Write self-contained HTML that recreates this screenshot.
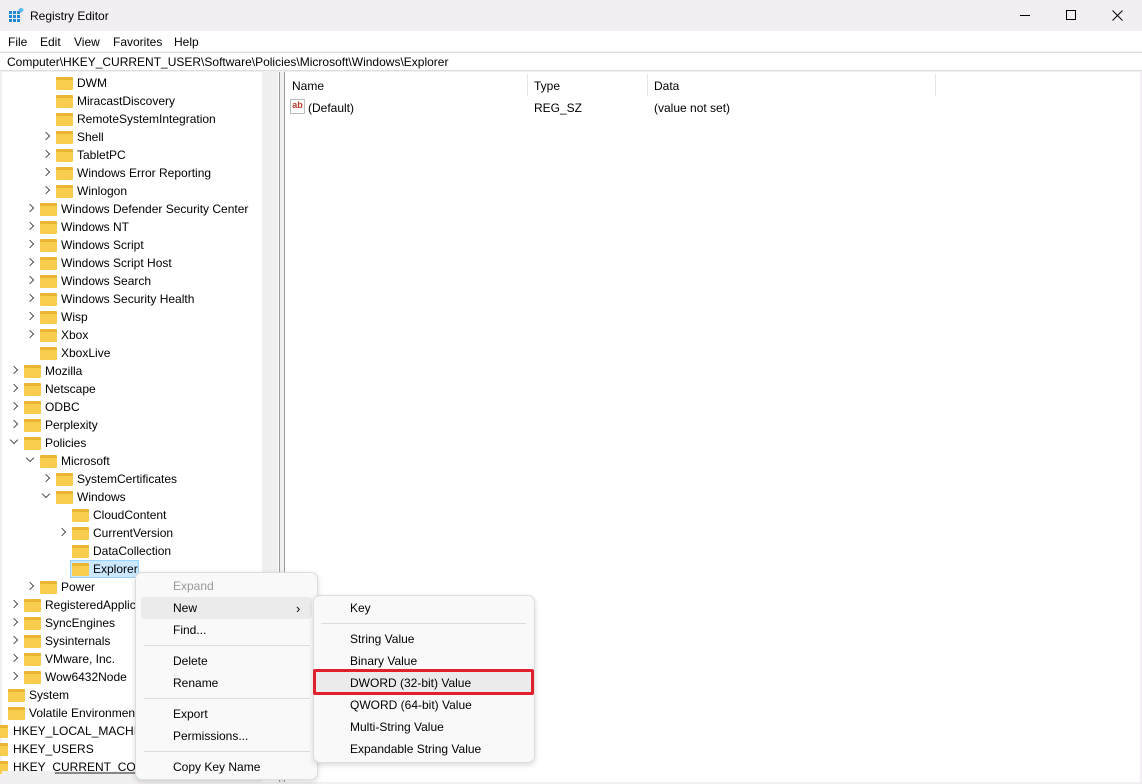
<!DOCTYPE html>
<html><head><meta charset="utf-8"><style>
*{margin:0;padding:0;box-sizing:border-box}
body{width:1142px;height:784px;position:relative;overflow:hidden;background:#f3eef3;font-family:"Liberation Sans",sans-serif;font-size:12px;color:#000}
.a{position:absolute;white-space:nowrap}
.r{position:absolute;height:18px;line-height:18px;white-space:nowrap}
.f{position:absolute;width:17px;height:13px;top:3px;background:#f8cd4e;border-radius:1px;border-top:3px solid #e9b532}
.e{position:absolute;top:5px;width:6px;height:6px;border-right:1px solid #555;border-bottom:1px solid #555;transform:rotate(-45deg)}
.o{transform:rotate(45deg);top:3px}
.m{position:absolute;left:173px;height:22px;line-height:22px}
.s{position:absolute;left:350px;height:22px;line-height:22px}
</style></head><body>
<div class="a" style="left:9px;top:8px;width:15px;height:15px">
<svg width="15" height="15"><g fill="#1e88d6"><rect x="0" y="3" width="3" height="3"/><rect x="4" y="3" width="3" height="3"/><rect x="8" y="3" width="3" height="3"/><rect x="0" y="7" width="3" height="3"/><rect x="4" y="7" width="3" height="3"/><rect x="8" y="7" width="3" height="3"/><rect x="0" y="11" width="3" height="3"/><rect x="4" y="11" width="3" height="3"/><rect x="8" y="11" width="3" height="3"/></g><rect x="10" y="0" width="4" height="4" fill="#5ab8f0" transform="rotate(45 12 2)"/></svg></div>
<div class="a" style="left:30px;top:9px;font-size:12px">Registry Editor</div>
<div class="a" style="left:1020px;top:15px;width:10px;height:1px;background:#000"></div>
<div class="a" style="left:1066px;top:10px;width:10px;height:10px;border:1px solid #000"></div>
<svg class="a" style="left:1112px;top:10px" width="11" height="11"><path d="M0.5 0.5L10.5 10.5M10.5 0.5L0.5 10.5" stroke="#000" stroke-width="1"/></svg>
<div class="a" style="left:0;top:31px;width:1142px;height:20px;background:#fff"></div>
<div class="a" style="left:8px;top:35px">File</div>
<div class="a" style="left:40px;top:35px">Edit</div>
<div class="a" style="left:74px;top:35px">View</div>
<div class="a" style="left:113px;top:35px">Favorites</div>
<div class="a" style="left:174px;top:35px">Help</div>
<div class="a" style="left:0;top:52px;width:1142px;height:19px;background:#fff;border-top:1px solid #ddd;border-bottom:1px solid #ddd"></div>
<div class="a" style="left:7px;top:55px">Computer\HKEY_CURRENT_USER\Software\Policies\Microsoft\Windows\Explorer</div>
<div class="a" style="left:2px;top:72px;width:277px;height:710px;background:#fff"></div>
<div class="a" style="left:262px;top:72px;width:16px;height:700px;background:#f0f0f0"></div>
<div class="a" style="left:279px;top:72px;width:6px;height:710px;background:#f0f0f0;border-left:1px solid #999;border-right:1px solid #999"></div>
<div class="a" style="left:285px;top:72px;width:855px;height:710px;background:#fff"></div>

<div style="position:absolute;left:0;top:1px">
<div class="r" style="top:73px;left:56px"><span class="f" style="left:0"></span><span style="position:absolute;left:21px">DWM</span></div>
<div class="r" style="top:91px;left:56px"><span class="f"></span><span style="position:absolute;left:21px">MiracastDiscovery</span></div>
<div class="r" style="top:109px;left:56px"><span class="f"></span><span style="position:absolute;left:21px">RemoteSystemIntegration</span></div>
<div class="r" style="top:127px;left:43px"><span class="e"></span><span class="f" style="left:13px"></span><span style="position:absolute;left:34px">Shell</span></div>
<div class="r" style="top:145px;left:43px"><span class="e"></span><span class="f" style="left:13px"></span><span style="position:absolute;left:34px">TabletPC</span></div>
<div class="r" style="top:163px;left:43px"><span class="e"></span><span class="f" style="left:13px"></span><span style="position:absolute;left:34px">Windows Error Reporting</span></div>
<div class="r" style="top:181px;left:43px"><span class="e"></span><span class="f" style="left:13px"></span><span style="position:absolute;left:34px">Winlogon</span></div>
<div class="r" style="top:199px;left:27px"><span class="e"></span><span class="f" style="left:13px"></span><span style="position:absolute;left:34px">Windows Defender Security Center</span></div>
<div class="r" style="top:217px;left:27px"><span class="e"></span><span class="f" style="left:13px"></span><span style="position:absolute;left:34px">Windows NT</span></div>
<div class="r" style="top:235px;left:27px"><span class="e"></span><span class="f" style="left:13px"></span><span style="position:absolute;left:34px">Windows Script</span></div>
<div class="r" style="top:253px;left:27px"><span class="e"></span><span class="f" style="left:13px"></span><span style="position:absolute;left:34px">Windows Script Host</span></div>
<div class="r" style="top:271px;left:27px"><span class="e"></span><span class="f" style="left:13px"></span><span style="position:absolute;left:34px">Windows Search</span></div>
<div class="r" style="top:289px;left:27px"><span class="e"></span><span class="f" style="left:13px"></span><span style="position:absolute;left:34px">Windows Security Health</span></div>
<div class="r" style="top:307px;left:27px"><span class="e"></span><span class="f" style="left:13px"></span><span style="position:absolute;left:34px">Wisp</span></div>
<div class="r" style="top:325px;left:27px"><span class="e"></span><span class="f" style="left:13px"></span><span style="position:absolute;left:34px">Xbox</span></div>
<div class="r" style="top:343px;left:40px"><span class="f"></span><span style="position:absolute;left:21px">XboxLive</span></div>
<div class="r" style="top:361px;left:11px"><span class="e"></span><span class="f" style="left:13px"></span><span style="position:absolute;left:34px">Mozilla</span></div>
<div class="r" style="top:379px;left:11px"><span class="e"></span><span class="f" style="left:13px"></span><span style="position:absolute;left:34px">Netscape</span></div>
<div class="r" style="top:397px;left:11px"><span class="e"></span><span class="f" style="left:13px"></span><span style="position:absolute;left:34px">ODBC</span></div>
<div class="r" style="top:415px;left:11px"><span class="e"></span><span class="f" style="left:13px"></span><span style="position:absolute;left:34px">Perplexity</span></div>
<div class="r" style="top:433px;left:11px"><span class="e o"></span><span class="f" style="left:13px"></span><span style="position:absolute;left:34px">Policies</span></div>
<div class="r" style="top:451px;left:27px"><span class="e o"></span><span class="f" style="left:13px"></span><span style="position:absolute;left:34px">Microsoft</span></div>
<div class="r" style="top:469px;left:43px"><span class="e"></span><span class="f" style="left:13px"></span><span style="position:absolute;left:34px">SystemCertificates</span></div>
<div class="r" style="top:487px;left:43px"><span class="e o"></span><span class="f" style="left:13px"></span><span style="position:absolute;left:34px">Windows</span></div>
<div class="r" style="top:505px;left:72px"><span class="f"></span><span style="position:absolute;left:21px">CloudContent</span></div>
<div class="r" style="top:523px;left:59px"><span class="e"></span><span class="f" style="left:13px"></span><span style="position:absolute;left:34px">CurrentVersion</span></div>
<div class="r" style="top:541px;left:72px"><span class="f"></span><span style="position:absolute;left:21px">DataCollection</span></div>
<div class="a" style="left:70px;top:559px;width:69px;height:18px;background:#cce8ff;border:1px solid #99d1ff"></div>
<div class="r" style="top:559px;left:72px"><span class="f"></span><span style="position:absolute;left:21px">Explorer</span></div>
<div class="r" style="top:577px;left:27px"><span class="e"></span><span class="f" style="left:13px"></span><span style="position:absolute;left:34px">Power</span></div>
<div class="r" style="top:595px;left:11px"><span class="e"></span><span class="f" style="left:13px"></span><span style="position:absolute;left:34px">RegisteredApplic</span></div>
<div class="r" style="top:613px;left:11px"><span class="e"></span><span class="f" style="left:13px"></span><span style="position:absolute;left:34px">SyncEngines</span></div>
<div class="r" style="top:631px;left:11px"><span class="e"></span><span class="f" style="left:13px"></span><span style="position:absolute;left:34px">Sysinternals</span></div>
<div class="r" style="top:649px;left:11px"><span class="e"></span><span class="f" style="left:13px"></span><span style="position:absolute;left:34px">VMware, Inc.</span></div>
<div class="r" style="top:667px;left:11px"><span class="e"></span><span class="f" style="left:13px"></span><span style="position:absolute;left:34px">Wow6432Node</span></div>
<div class="r" style="top:685px;left:8px"><span class="f"></span><span style="position:absolute;left:21px">System</span></div>
<div class="r" style="top:703px;left:8px"><span class="f"></span><span style="position:absolute;left:21px">Volatile Environment</span></div>
<div class="r" style="top:721px;left:-9px"><span class="f"></span><span style="position:absolute;left:22px">HKEY_LOCAL_MACHINE</span></div>
<div class="r" style="top:739px;left:-9px"><span class="f"></span><span style="position:absolute;left:22px">HKEY_USERS</span></div>
<div class="r" style="top:757px;left:-9px"><span class="f"></span><span style="position:absolute;left:22px">HKEY_CURRENT_CONFIG</span></div>
</div>
<div class="a" style="left:2px;top:771px;width:260px;height:11px;background:#f0f0f0"></div>
<div class="a" style="left:55px;top:772px;width:148px;height:2px;background:#888"></div>

<div class="a" style="left:292px;top:79px">Name</div>
<div class="a" style="left:527px;top:74px;width:1px;height:22px;background:#e5e5e5"></div>
<div class="a" style="left:534px;top:79px">Type</div>
<div class="a" style="left:647px;top:74px;width:1px;height:22px;background:#e5e5e5"></div>
<div class="a" style="left:654px;top:79px">Data</div>
<div class="a" style="left:935px;top:74px;width:1px;height:22px;background:#e5e5e5"></div>
<div class="a" style="left:290px;top:99px;width:15px;height:15px;border:1px solid #bbb;background:#fff;color:#c0392b;font-size:9px;font-weight:bold;line-height:11px;text-align:center">ab</div>
<div class="a" style="left:308px;top:101px">(Default)</div>
<div class="a" style="left:534px;top:101px">REG_SZ</div>
<div class="a" style="left:654px;top:101px">(value not set)</div>

<div class="a" style="left:135px;top:572px;width:183px;height:208px;background:#f9f9f9;border:1px solid #ddd;border-radius:7px;box-shadow:0 2px 6px rgba(0,0,0,.15)"></div>
<div class="m" style="top:575px;color:#999">Expand</div>
<div class="a" style="left:141px;top:597px;width:171px;height:22px;background:#ebebeb;border-radius:4px"></div>
<div class="m" style="top:597px">New</div>
<div class="a" style="left:296px;top:601px;font-size:13px">›</div>
<div class="m" style="top:619px">Find...</div>
<div class="a" style="left:144px;top:645px;width:166px;height:1px;background:#ddd"></div>
<div class="m" style="top:650px">Delete</div>
<div class="m" style="top:672px">Rename</div>
<div class="a" style="left:144px;top:698px;width:166px;height:1px;background:#ddd"></div>
<div class="m" style="top:703px">Export</div>
<div class="m" style="top:725px">Permissions...</div>
<div class="a" style="left:144px;top:751px;width:166px;height:1px;background:#ddd"></div>
<div class="m" style="top:756px">Copy Key Name</div>

<div class="a" style="left:313px;top:595px;width:222px;height:168px;background:#f9f9f9;border:1px solid #ddd;border-radius:7px;box-shadow:0 2px 6px rgba(0,0,0,.15)"></div>
<div class="s" style="top:597px">Key</div>
<div class="a" style="left:321px;top:623px;width:205px;height:1px;background:#ddd"></div>
<div class="s" style="top:628px">String Value</div>
<div class="s" style="top:650px">Binary Value</div>
<div class="a" style="left:313px;top:669px;width:221px;height:26px;background:#ebebeb;border:3px solid #e0202a;border-radius:2px"></div>
<div class="s" style="top:672px">DWORD (32-bit) Value</div>
<div class="s" style="top:694px">QWORD (64-bit) Value</div>
<div class="s" style="top:716px">Multi-String Value</div>
<div class="s" style="top:738px">Expandable String Value</div>
</body></html>
